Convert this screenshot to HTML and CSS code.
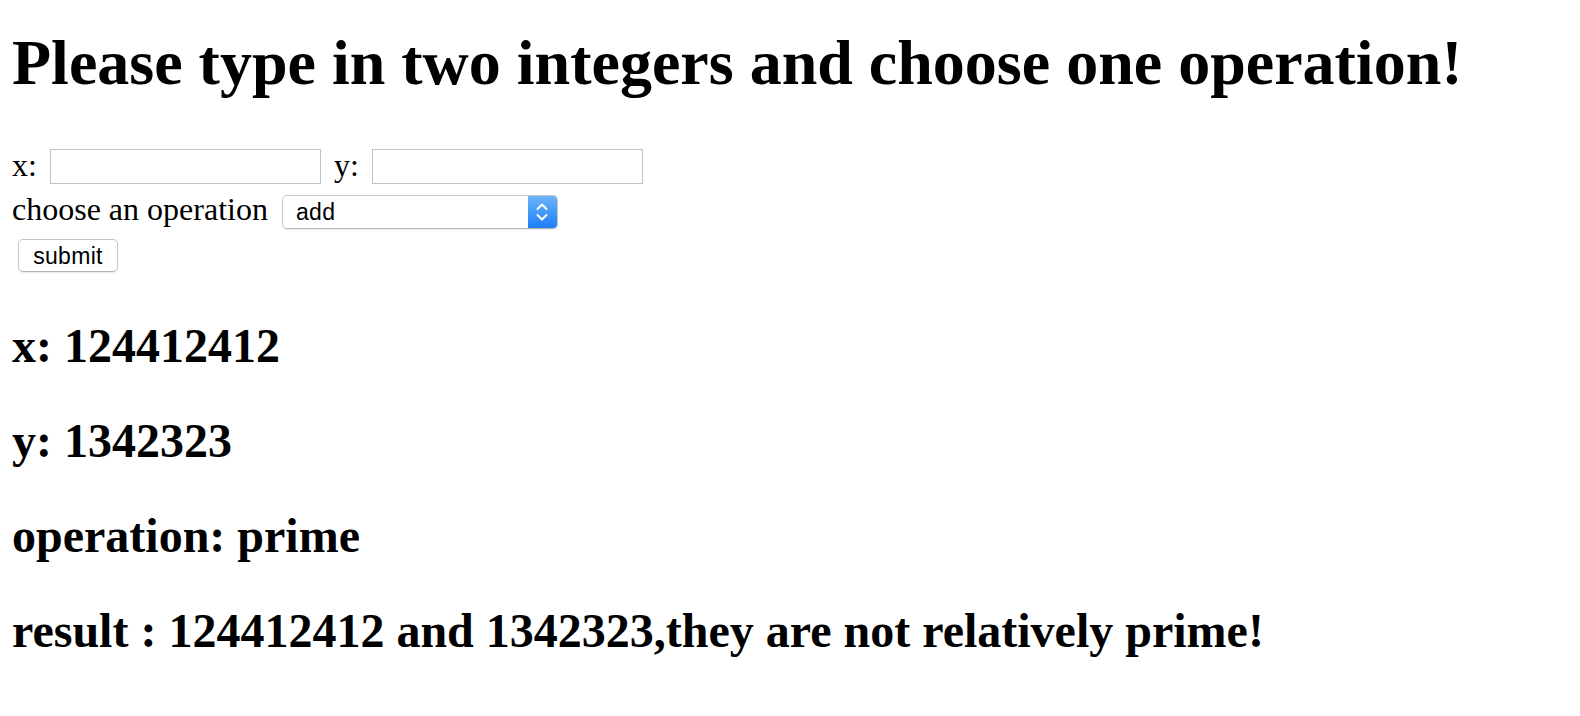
FILE: index.html
```html
<!DOCTYPE html>
<html>
<head>
<meta charset="utf-8">
<title>Integers</title>
<link rel="stylesheet" href="styles.css">
</head>
<body>
<h1 class="title">Please type in two integers and choose one operation!</h1>
<form class="form">
  <div class="row row-xy">
    <span class="label">x:</span>
    <span class="field field-x"></span>
    <span class="label">y:</span>
    <span class="field field-y"></span>
  </div>
  <div class="row row-op">
    <span class="label">choose an operation</span>
    <div class="select">
      <span class="select-text">add</span>
      <span class="select-arrows">
        <svg width="14" height="22" viewBox="0 0 14 22"><path d="M2.5 8 L7 3.5 L11.5 8" fill="none" stroke="#fff" stroke-width="2" stroke-linecap="round" stroke-linejoin="round"/><path d="M2.5 14 L7 18.5 L11.5 14" fill="none" stroke="#fff" stroke-width="2" stroke-linecap="round" stroke-linejoin="round"/></svg>
      </span>
    </div>
  </div>
  <div class="row row-btn">
    <button type="button" class="btn">submit</button>
  </div>
</form>
<h2 class="out first">x: 124412412</h2>
<h2 class="out">y: 1342323</h2>
<h2 class="out">operation: prime</h2>
<h2 class="out">result : 124412412 and 1342323,they are not relatively prime!</h2>
</body>
</html>
```
FILE: styles.css
```css
html, body {
  margin: 0;
  padding: 0;
  background: #fff;
}
body {
  padding: 0 12px;
  font-family: "Liberation Serif", "Times New Roman", serif;
  color: #000;
}
.title {
  margin: 26px 0 0;
  font-size: 64px;
  line-height: 74px;
  font-weight: bold;
}
.form {
  margin: 49px 0 0;
  display: flex;
  flex-direction: column;
}
.row {
  display: flex;
  align-items: center;
}
.label {
  font-size: 32px;
  line-height: 37px;
}
.row-xy {
  height: 35px;
}
.row-xy .label {
  margin-bottom: 3px;
}
.field {
  box-sizing: border-box;
  width: 271px;
  height: 35px;
  border: 1px solid #c2c2c2;
  background: #fff;
}
.field-x {
  margin: 0 13px 0 13px;
}
.field-y {
  margin-left: 13px;
}
.row-op {
  margin-top: 11px;
  height: 34px;
}
.row-op .label {
  margin-bottom: 5px;
}
.select {
  box-sizing: border-box;
  margin-left: 14px;
  width: 276px;
  height: 34px;
  display: flex;
  align-items: center;
  border: 1px solid #c8c8c8;
  border-bottom-color: #b8b8b8;
  border-radius: 5px;
  background: #fff;
  overflow: hidden;
  box-shadow: 0 1px 1px rgba(0,0,0,0.08);
}
.select-text {
  flex: 1;
  padding-left: 13px;
  font-family: "Liberation Sans", Arial, sans-serif;
  font-size: 23px;
  letter-spacing: 0.4px;
  color: #000;
}
.select-arrows {
  width: 29px;
  align-self: stretch;
  display: flex;
  align-items: center;
  justify-content: center;
  background: linear-gradient(#6db4fb, #1b7ff6);
}
.row-btn {
  margin-top: 10px;
}
.btn {
  box-sizing: border-box;
  margin-left: 6px;
  width: 100px;
  height: 33px;
  padding: 1px 0 0;
  border: 1px solid #c6c6c6;
  border-bottom-color: #b4b4b4;
  border-radius: 5px;
  background: #fff;
  box-shadow: 0 1px 1px rgba(0,0,0,0.08);
  font-family: "Liberation Sans", Arial, sans-serif;
  font-size: 23px;
  letter-spacing: 0.3px;
  color: #000;
}
.out {
  margin: 40px 0 0;
  font-size: 48px;
  line-height: 55px;
  font-weight: bold;
}
.out.first {
  margin-top: 46px;
}
```
